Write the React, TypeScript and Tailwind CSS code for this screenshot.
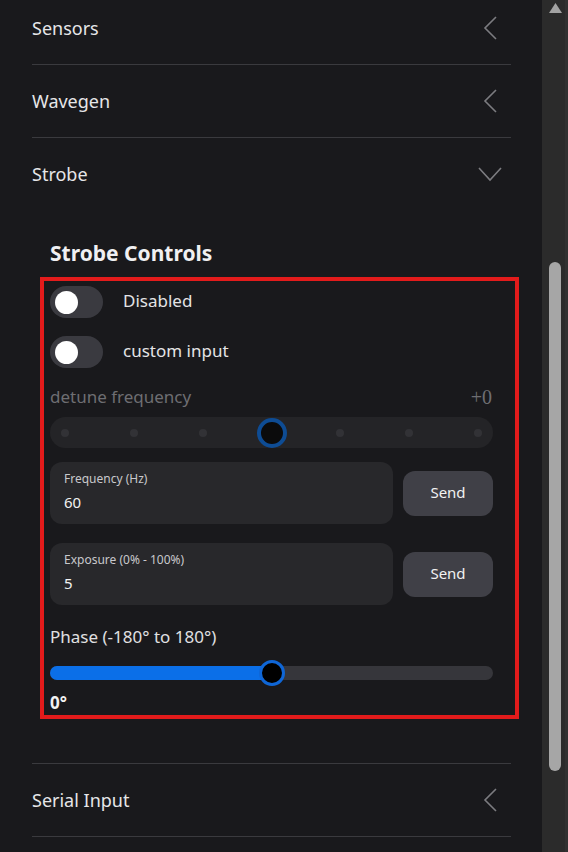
import React from 'react';

const font = { fontFamily: '"Noto Sans", "Open Sans", Arial, sans-serif' };

function ChevronLeft() {
  return (
    <svg width="14" height="24" viewBox="0 0 14 24" className="text-[#7c7c80]">
      <path d="M13 1 L2 12 L13 23" fill="none" stroke="currentColor" strokeWidth="1.6" />
    </svg>
  );
}

function ChevronDown() {
  return (
    <svg width="24" height="16" viewBox="0 0 24 16" className="text-[#7c7c80]">
      <path d="M1 2 L12 14 L23 2" fill="none" stroke="currentColor" strokeWidth="1.6" />
    </svg>
  );
}

function SectionHeader({ title, open }: { title: string; open?: boolean }) {
  return (
    <div className="flex h-[72px] items-center justify-between">
      <span className="text-[18px] text-[#e6e6e8]">{title}</span>
      <div className="flex w-[40px] justify-center pr-[3px]">{open ? <ChevronDown /> : <ChevronLeft />}</div>
    </div>
  );
}

function Toggle({ label }: { label: string }) {
  return (
    <div className="flex h-[32px] items-center gap-[20px]">
      <div className="flex h-[32px] w-[53px] items-center rounded-full bg-[#3a3a40] pl-[5px]">
        <div className="h-[23px] w-[23px] rounded-full bg-white" />
      </div>
      <span className="-mt-[2px] text-[17px] text-[#e4e4e6]">{label}</span>
    </div>
  );
}

function InputRow({ label, value, className }: { label: string; value: string; className: string }) {
  return (
    <div className={`flex items-center gap-[10px] ${className}`}>
      <div className="flex h-[62px] flex-1 flex-col justify-center rounded-[12px] bg-[#28282b] px-[14px] pb-[4px]">
        <span className="text-[12px] leading-[18px] text-[#c8c8cc]">{label}</span>
        <span className="mt-[4px] text-[15px] leading-[20px] text-[#f2f2f2]">{value}</span>
      </div>
      <button className="h-[45px] w-[90px] rounded-[12px] bg-[#404047] pb-[2px] text-[15px] text-[#f2f2f2]">Send</button>
    </div>
  );
}

export default function App() {
  const dots = [0, 1, 2, 3, 4, 5, 6];
  return (
    <div className="flex h-[852px] w-[568px] overflow-hidden bg-[#19191c]" style={font}>
      <div className="flex-1 overflow-hidden pl-[32px] pr-[31px]">
        <div className="-mt-[8px] border-b border-[#3a3a3e]">
          <SectionHeader title="Sensors" />
        </div>
        <div className="border-b border-[#3a3a3e]">
          <SectionHeader title="Wavegen" />
        </div>
        <div className="border-b border-[#3a3a3e]">
          <SectionHeader title="Strobe" open />
          <div className="pt-[29px] pb-[44px]">
            <h3 className="pl-[18px] text-[21px] font-bold leading-[28px] text-[#f0f0f2]">Strobe Controls</h3>
            <div className="ml-[8px] mt-[10px] w-[479px] border-4 border-[#e31b1b] pl-[6px] pr-[22px] pt-[5px] pb-[1px]">
              <div className="flex flex-col gap-[18px]">
                <Toggle label="Disabled" />
                <Toggle label="custom input" />
              </div>
              <div className="mt-[18px] flex h-[24px] items-center justify-between text-[17px] text-[#6e6e72]">
                <span className="-mt-[2px]">detune frequency</span>
                <span className="-mt-[2px] pr-[1px] text-[20px]" style={{ fontFamily: '"Liberation Serif", serif' }}>+0</span>
              </div>
              <div className="relative mt-[7px] flex h-[31px] items-center justify-between rounded-full bg-[#242427] px-[11px]">
                {dots.map((d) => (
                  <div key={d} className="h-[8px] w-[8px] rounded-full bg-[#323236]" />
                ))}
                <div className="absolute left-1/2 top-1/2 h-[30px] w-[30px] -translate-x-1/2 -translate-y-1/2 rounded-full border-4 border-[#0e4c94] bg-[#0b0b0c]" />
              </div>
              <InputRow label="Frequency (Hz)" value="60" className="mt-[14px]" />
              <InputRow label="Exposure (0% - 100%)" value="5" className="mt-[19px]" />
              <div className="mt-[20px] h-[24px] text-[17px] leading-[24px] text-[#e0e0e2]">Phase (-180° to 180°)</div>
              <div className="relative mt-[11px] flex h-[26px] items-center">
                <div className="flex h-[14px] w-full overflow-hidden rounded-full bg-[#36363b]">
                  <div className="h-full w-1/2 bg-[#0b6fe8]" />
                </div>
                <div className="absolute left-1/2 top-0 h-[26px] w-[26px] -translate-x-1/2 rounded-full border-[3px] border-[#0f66d6] bg-black" />
              </div>
              <div className="mt-[6px] h-[22px] text-[17px] font-bold leading-[22px] text-[#f2f2f2]">0°</div>
            </div>
          </div>
        </div>
        <div className="border-b border-[#3a3a3e]">
          <SectionHeader title="Serial Input" />
        </div>
      </div>
      <div className="flex w-[26px] flex-col items-center border-r-[3px] border-[#313131] bg-[#2b2b2b]">
        <svg width="13" height="11" viewBox="0 0 13 11" className="mt-[3px] ml-[3px]">
          <path d="M6.5 0 L13 10 L0 10 Z" fill="#a3a3a3" />
        </svg>
        <div className="ml-[3px] mt-[248px] h-[509px] w-[12px] rounded-full bg-[#a6a6a6]" />
      </div>
    </div>
  );
}
